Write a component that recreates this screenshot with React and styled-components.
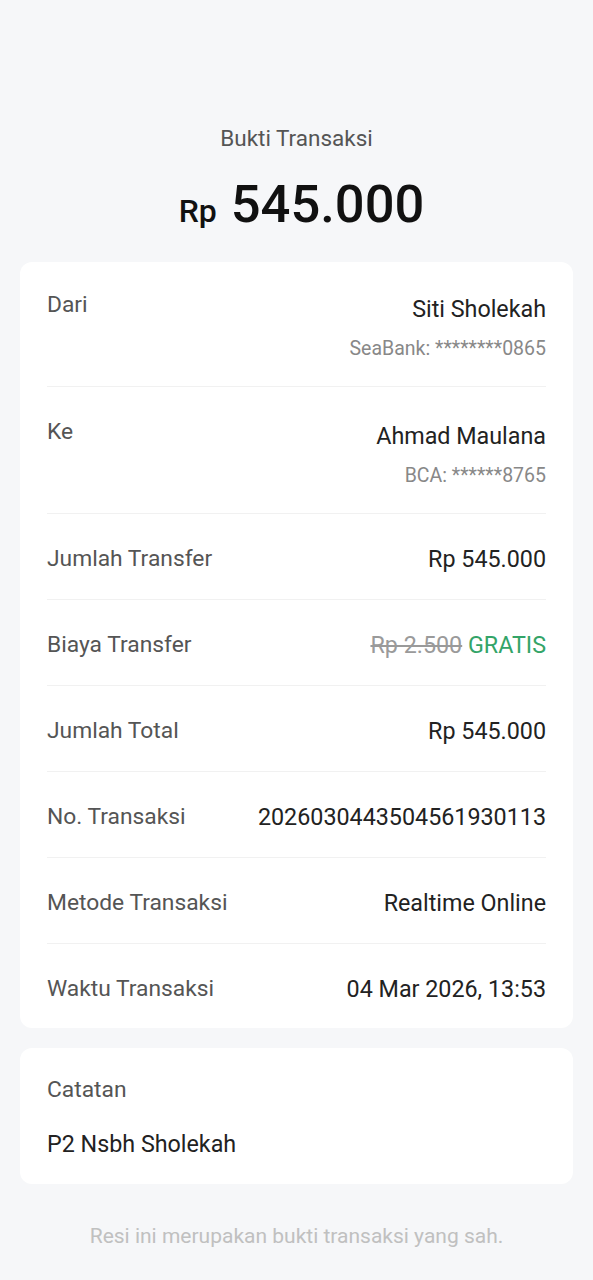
import React from 'react';
import styled, { createGlobalStyle } from 'styled-components';

const GlobalStyle = createGlobalStyle`
  html, body {
    margin: 0;
    padding: 0;
    background: #f6f7f9;
  }
  body {
    font-family: Roboto, "Liberation Sans", sans-serif;
    -webkit-font-smoothing: antialiased;
  }
`

const Page = styled.div`
  min-height: 1280px;
  padding: 124px 20px 40px;
  box-sizing: border-box;
`

const Title = styled.div`
  font-size: 22.5px;
  line-height: 28px;
  color: #555;
  text-align: center;
`

const Amount = styled.div`
  display: flex;
  justify-content: center;
  align-items: baseline;
  margin-top: 20px;
  padding-left: 10px;
  line-height: 64px;
  color: #111;
  font-weight: 500;
`

const Currency = styled.span`
  font-size: 32px;
  margin-right: 14px;
`

const Total = styled.span`
  font-size: 52.5px;
`

const Card = styled.div`
  background: #fff;
  border-radius: 12px;
  padding: ${p => p.note ? '28px 27px 26px' : '0 27px'};
  margin-top: ${p => p.note ? '20px' : '19px'};
`

const Row = styled.div`
  display: flex;
  justify-content: space-between;
  align-items: flex-start;
  padding: 31px 0 26px;
  border-bottom: 1px solid #f1f1f1;
  &:first-child { padding-top: 29px; }
  &:last-child { border-bottom: none; padding-bottom: 25px; }
`

const Label = styled.div`
  font-size: 22.8px;
  line-height: 28px;
  color: #555;
`

const Right = styled.div`
  display: flex;
  flex-direction: column;
  align-items: flex-end;
  margin-top: ${p => p.stacked ? '4px' : '0'};
`

const Value = styled.div`
  font-size: 23.3px;
  line-height: 28px;
  color: #222;
  text-align: right;
`

const Sub = styled.div`
  font-size: 19.5px;
  line-height: 24px;
  color: #888;
  margin-top: 14px;
  margin-bottom: -1px;
`

const Strike = styled.span`
  color: #9a9a9a;
  text-decoration: line-through;
`

const Free = styled.span`
  color: #33a468;
`

const Note = styled.div`
  font-size: 23.3px;
  line-height: 28px;
  color: #222;
  margin-top: 26px;
`

const Footer = styled.div`
  margin-top: 39px;
  text-align: center;
  font-size: 21px;
  line-height: 26px;
  color: #c0c0c0;
`

const rows = [
  { label: 'Jumlah Transfer', value: 'Rp 545.000' },
  { label: 'Biaya Transfer', fee: true },
  { label: 'Jumlah Total', value: 'Rp 545.000' },
  { label: 'No. Transaksi', value: '2026030443504561930113' },
  { label: 'Metode Transaksi', value: 'Realtime Online' },
  { label: 'Waktu Transaksi', value: '04 Mar 2026, 13:53' },
]

const App = () => {
  return (
    <Page>
      <GlobalStyle />
      <Title>Bukti Transaksi</Title>
      <Amount>
        <Currency>Rp</Currency>
        <Total>545.000</Total>
      </Amount>

      <Card>
        <Row>
          <Label>Dari</Label>
          <Right stacked>
            <Value>Siti Sholekah</Value>
            <Sub>SeaBank: ********0865</Sub>
          </Right>
        </Row>
        <Row>
          <Label>Ke</Label>
          <Right stacked>
            <Value>Ahmad Maulana</Value>
            <Sub>BCA: ******8765</Sub>
          </Right>
        </Row>
        {rows.map(r => (
          <Row key={r.label}>
            <Label>{r.label}</Label>
            <Right>
              {r.fee
                ? <Value><Strike>Rp 2.500</Strike> <Free>GRATIS</Free></Value>
                : <Value>{r.value}</Value>}
            </Right>
          </Row>
        ))}
      </Card>

      <Card note>
        <Label>Catatan</Label>
        <Note>P2 Nsbh Sholekah</Note>
      </Card>

      <Footer>Resi ini merupakan bukti transaksi yang sah.</Footer>
    </Page>
  );
}

export default App;
